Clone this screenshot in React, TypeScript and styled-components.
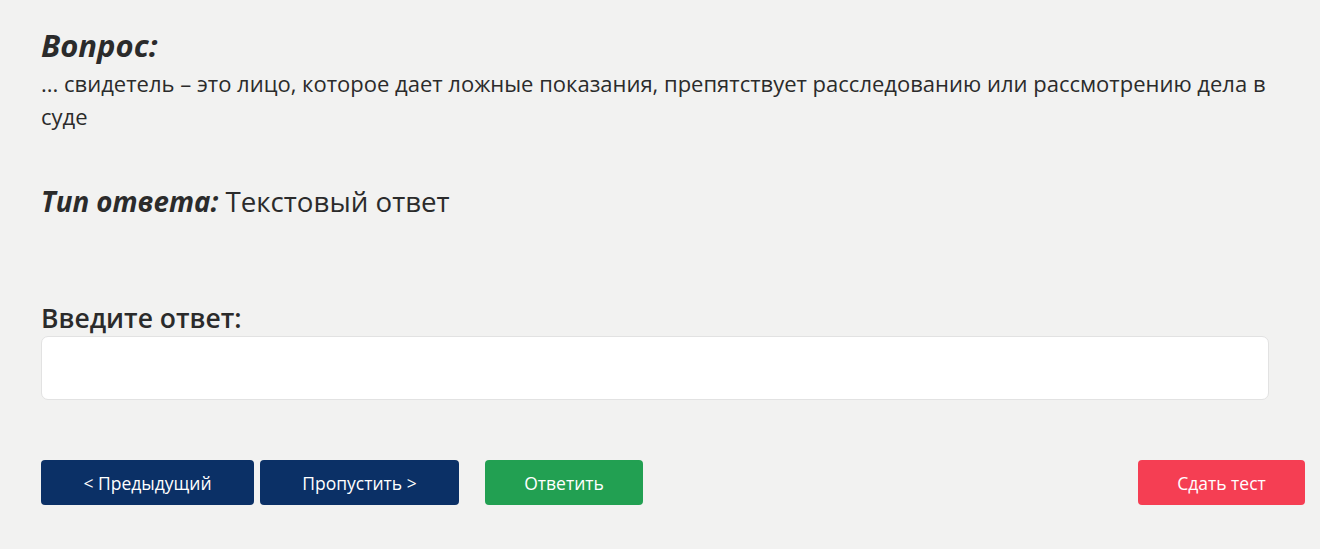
import styled, {createGlobalStyle} from 'styled-components';

const GlobalStyle = createGlobalStyle`
  html, body {
    margin: 0;
    padding: 0;
    background: #f2f2f1;
  }
  body {
    font-family: 'Open Sans', 'Noto Sans', sans-serif;
    color: #2b2b2b;
  }
`;

const App = () => {
  return (
    <>
      <GlobalStyle />
      <Page>
        <Body>
          <Title>Вопрос:</Title>
          <QuestionText>
            ... свидетель – это лицо, которое дает ложные показания,
            препятствует расследованию или рассмотрению дела в суде
          </QuestionText>
          <AnswerType>
            <em>Тип ответа:</em> Текстовый ответ
          </AnswerType>
          <Label htmlFor="answer">Введите ответ:</Label>
          <Input id="answer" type="text" />
        </Body>
        <Actions>
          <Button $variant="navy" $width={213}>
            &lt; Предыдущий
          </Button>
          <Button $variant="navy" $width={199}>
            Пропустить &gt;
          </Button>
          <Button $variant="green" $width={158} $offset={20}>
            Ответить
          </Button>
          <Spacer />
          <Button $variant="red" $width={167}>
            Сдать тест
          </Button>
        </Actions>
      </Page>
    </>
  );
};

const colors = {
  navy: '#0b3066',
  green: '#22a052',
  red: '#f53e53',
};

const Page = styled.div`
  padding: 23px 15px 0 41px;
  height: 549px;
  box-sizing: border-box;
`;
const Body = styled.div`
  width: 1228px;
  display: flex;
  flex-direction: column;
`;
const Title = styled.h2`
  margin: 0;
  font-size: 31px;
  line-height: 44px;
  font-weight: 700;
  font-style: italic;
`;
const QuestionText = styled.p`
  margin: 0 -6px 0 0;
  font-size: 22px;
  line-height: 33px;
`;
const AnswerType = styled.p`
  margin: 48px 0 0;
  font-size: 27.7px;
  line-height: 40px;
  em {
    font-weight: 700;
  }
`;
const Label = styled.label`
  margin-top: 79px;
  font-size: 26.5px;
  line-height: 36px;
  font-weight: 600;
`;
const Input = styled.input`
  height: 64px;
  box-sizing: border-box;
  border: 1px solid #e2e2e2;
  border-radius: 7px;
  background: #fff;
  font-size: 20px;
  padding: 0 16px;
  outline: none;
`;
const Actions = styled.div`
  margin-top: 60px;
  display: flex;
  gap: 6px;
`;
const Spacer = styled.div`
  flex: 1;
`;
const Button = styled.button<{
  $variant: 'navy' | 'green' | 'red';
  $width: number;
  $offset?: number;
}>`
  width: ${p => p.$width}px;
  height: 45px;
  margin-left: ${p => p.$offset ?? 0}px;
  border: none;
  border-radius: 4px;
  background: ${p => colors[p.$variant]};
  color: #fff;
  font-family: 'Open Sans', 'Noto Sans', sans-serif;
  font-size: 17.5px;
  cursor: pointer;
`;

export default App;
